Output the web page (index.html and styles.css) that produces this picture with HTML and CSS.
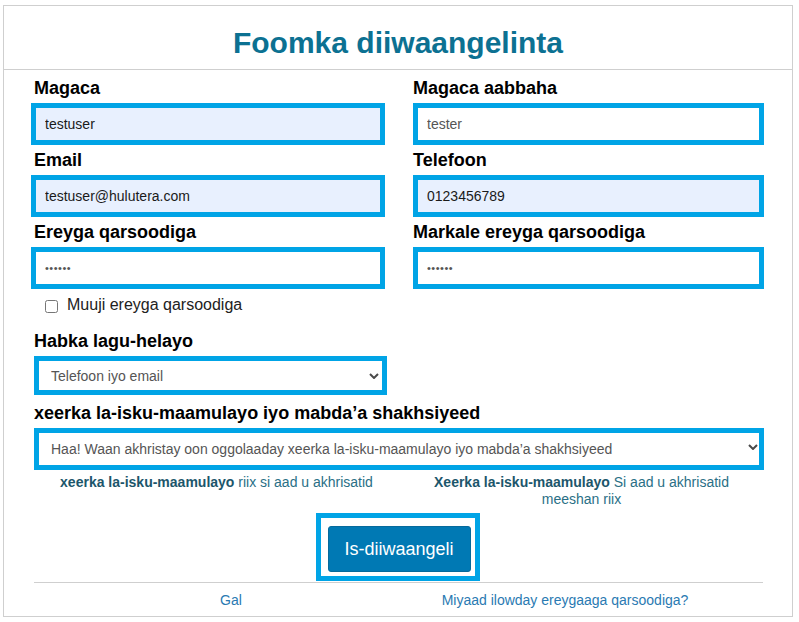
FILE: index.html
```html
<!DOCTYPE html>
<html>
<head>
<meta charset="utf-8">
<link rel="stylesheet" href="styles.css">
</head>
<body>
<div class="card">
  <div class="header"><h1 class="title">Foomka diiwaangelinta</h1></div>
  <form class="form">
    <div class="grid">
      <div class="field left">
        <label class="label">Magaca</label>
        <input class="input filled" type="text" value="testuser">
      </div>
      <div class="field">
        <label class="label">Magaca aabbaha</label>
        <input class="input plain" type="text" value="tester">
      </div>
      <div class="field left">
        <label class="label">Email</label>
        <input class="input filled" type="text" value="testuser@hulutera.com">
      </div>
      <div class="field">
        <label class="label">Telefoon</label>
        <input class="input filled" type="text" value="0123456789">
      </div>
      <div class="field left">
        <label class="label">Ereyga qarsoodiga</label>
        <input class="input plain pw" type="password" value="123456">
      </div>
      <div class="field">
        <label class="label">Markale ereyga qarsoodiga</label>
        <input class="input plain pw" type="password" value="123456">
      </div>
    </div>
    <div class="check-row">
      <input class="check" type="checkbox">
      <span class="check-text">Muuji ereyga qarsoodiga</span>
    </div>
    <label class="label label-habka">Habka lagu-helayo</label>
    <div class="select-wrap narrow">
      <select class="select"><option>Telefoon iyo email</option></select>
      <svg class="chev" viewBox="0 0 10 6" width="10" height="6"><path d="M1 1 L5 5 L9 1" fill="none" stroke="#4a4a4a" stroke-width="2"/></svg>
    </div>
    <label class="label label-xeer">xeerka la-isku-maamulayo iyo mabda’a shakhsiyeed</label>
    <div class="select-wrap wide">
      <select class="select"><option>Haa! Waan akhristay oon oggolaaday xeerka la-isku-maamulayo iyo mabda’a shakhsiyeed</option></select>
      <svg class="chev chev-wide" viewBox="0 0 10 6" width="10" height="6"><path d="M1 1 L5 5 L9 1" fill="none" stroke="#4a4a4a" stroke-width="2"/></svg>
    </div>
    <div class="terms">
      <div class="term"><b>xeerka la-isku-maamulayo</b> <span>riix si aad u akhrisatid</span></div>
      <div class="term"><b>Xeerka la-isku-maamulayo</b> <span>Si aad u akhrisatid</span><br><span>meeshan riix</span></div>
    </div>
    <div class="btn-row">
      <div class="btn-outline"><button class="btn" type="button">Is-diiwaangeli</button></div>
    </div>
    <div class="divider"></div>
    <div class="footer">
      <a class="flink">Gal</a>
      <a class="flink">Miyaad ilowday ereygaaga qarsoodiga?</a>
    </div>
  </form>
</div>
</body>
</html>
```

FILE: styles.css
```css
* { box-sizing: border-box; }
body {
  margin: 0;
  font-family: "Liberation Sans", Arial, sans-serif;
  background: #fff;
}
.card {
  margin: 5px 6px 0 3px;
  width: 790px;
  border: 1px solid #cfcfcf;
}
.header {
  border-bottom: 1px solid #cfcfcf;
  padding: 17px 0 6px;
}
.title {
  margin: 0;
  text-align: center;
  font-size: 30px;
  line-height: 40px;
  font-weight: bold;
  color: #0c7192;
}
.form {
  padding: 8px 28px 8px 30px;
  display: flex;
  flex-direction: column;
}
.grid {
  display: grid;
  grid-template-columns: 351px 351px;
  column-gap: 28px;
}
.field {
  display: flex;
  flex-direction: column;
}
.label {
  display: block;
  font-size: 18px;
  line-height: 20px;
  font-weight: bold;
  color: #000;
  margin-bottom: 5px;
}
.input {
  height: 42px;
  border: 5px solid #00a4e6;
  margin: 0 0 5px 0;
  padding: 0 0 0 9px;
  font-family: "Liberation Sans", Arial, sans-serif;
  font-size: 14px;
  outline: none;
}
.left .input {
  margin-left: -3px;
  width: calc(100% + 3px);
}
.filled {
  background: #e8f0fe;
  color: #1a1a1a;
}
.plain {
  background: #fff;
  color: #555;
}
.pw {
  font-size: 11px;
  letter-spacing: 0.5px;
  color: #555;
}
.check-row {
  display: flex;
  align-items: center;
  height: 20px;
  margin-top: 1px;
  padding-left: 11px;
}
.check {
  width: 13px;
  height: 13px;
  margin: 2px 9px 0 0;
}
.check-text {
  font-size: 16px;
  line-height: 16px;
  color: #222;
}
.label-habka { margin-top: 16px; }
.label-xeer { margin-top: 8px; }
.select-wrap {
  position: relative;
}
.narrow { width: 353px; }
.wide { width: 730px; }
.select {
  appearance: none;
  -webkit-appearance: none;
  width: 100%;
  border: 5px solid #00a4e6;
  background: #fff;
  color: #555;
  font-family: "Liberation Sans", Arial, sans-serif;
  font-size: 14px;
  padding: 0 0 0 12px;
  outline: none;
  border-radius: 0;
}
.narrow .select { height: 39px; }
.wide .select { height: 42px; }
.chev {
  position: absolute;
  right: 8px;
  top: 17px;
}
.chev-wide {
  right: 6px;
  top: 16px;
}
.terms {
  display: grid;
  grid-template-columns: 1fr 1fr;
  margin-top: 4px;
}
.term {
  padding: 0 15px;
  text-align: center;
  font-size: 14px;
  line-height: 17px;
  color: #2a6f86;
}
.term b { color: #1c566b; }
.btn-row {
  display: flex;
  justify-content: center;
  margin-top: 5px;
}
.btn-outline {
  border: 5px solid #00a4e6;
  padding: 8px 4px 4px 7px;
  margin-right: 3px;
}
.btn {
  display: block;
  width: 143px;
  height: 46px;
  border: 1px solid #066a9c;
  border-radius: 3px;
  background: #0079b4;
  color: #fff;
  font-family: "Liberation Sans", Arial, sans-serif;
  font-size: 18px;
  padding: 0;
}
.divider {
  height: 1px;
  background: #cfcfcf;
  margin-top: 1px;
  margin-right: 1px;
}
.footer {
  display: grid;
  grid-template-columns: 394px 274px;
  margin-top: 9px;
}
.flink {
  text-align: center;
  font-size: 14px;
  line-height: 16px;
  color: #2a7ab2;
}
```
